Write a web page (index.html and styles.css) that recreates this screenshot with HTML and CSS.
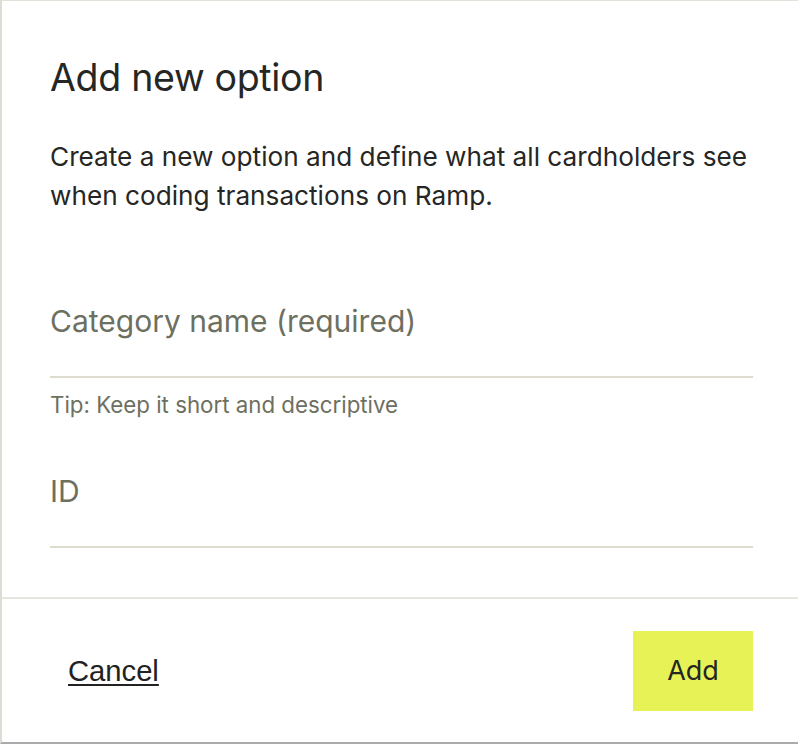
FILE: index.html
```html
<!DOCTYPE html>
<html>
<head>
<meta charset="utf-8">
<link rel="stylesheet" href="styles.css">
</head>
<body>
<div class="modal">
  <div class="body">
    <h1 class="title">Add new option</h1>
    <p class="desc">Create a new option and define what all cardholders see when coding transactions on Ramp.</p>
    <div class="field">
      <div class="input">Category name (required)</div>
      <div class="hint">Tip: Keep it short and descriptive</div>
    </div>
    <div class="field second">
      <div class="input">ID</div>
    </div>
  </div>
  <div class="footer">
    <a class="cancel">Cancel</a>
    <button class="add">Add</button>
  </div>
</div>
</body>
</html>
```
FILE: styles.css
```css
html, body { margin: 0; padding: 0; background: #fff; }
.modal {
  box-sizing: border-box;
  width: 798px;
  height: 744px;
  border-left: 2px solid #dcdcd4;
  border-top: 1px solid #e2e2da;
  border-bottom: 2px solid #ababab;
  font-family: Inter, "Noto Sans", sans-serif;
  color: #262624;
  display: flex;
  flex-direction: column;
}
.body {
  padding: 0 45px 0 48px;
  height: 596px;
  box-sizing: border-box;
}
.title {
  margin: 0;
  padding-top: 54px;
  font-size: 37.5px;
  font-weight: 400;
  line-height: 46px;
  letter-spacing: -0.3px;
}
.desc {
  margin: 36px 0 0;
  font-size: 26.2px;
  line-height: 39px;
}
.field { margin-top: 86px; }
.input {
  font-size: 30px;
  line-height: 40px;
  color: #6d6f60;
  padding-bottom: 35px;
  border-bottom: 2px solid #dedcce;
}
.hint {
  margin-top: 13px;
  font-size: 22.3px;
  line-height: 28px;
  color: #6d6f60;
}
.field.second { margin-top: 52px; }
.footer {
  border-top: 2px solid #e6e5e0;
  flex: 1;
  display: flex;
  align-items: center;
  justify-content: space-between;
  padding: 0 45px 0 66px;
}
.cancel {
  font-family: "Liberation Sans", Arial, sans-serif;
  font-size: 29.2px;
  color: #222;
  text-decoration: underline;
  text-underline-offset: 3px;
  text-decoration-thickness: 2px;
  margin-top: 2px;
}
.add {
  width: 120px;
  height: 80px;
  border: none;
  background: #e6f255;
  color: #262624;
  font-family: Inter, sans-serif;
  font-size: 27px;
  padding: 0;
}
```
